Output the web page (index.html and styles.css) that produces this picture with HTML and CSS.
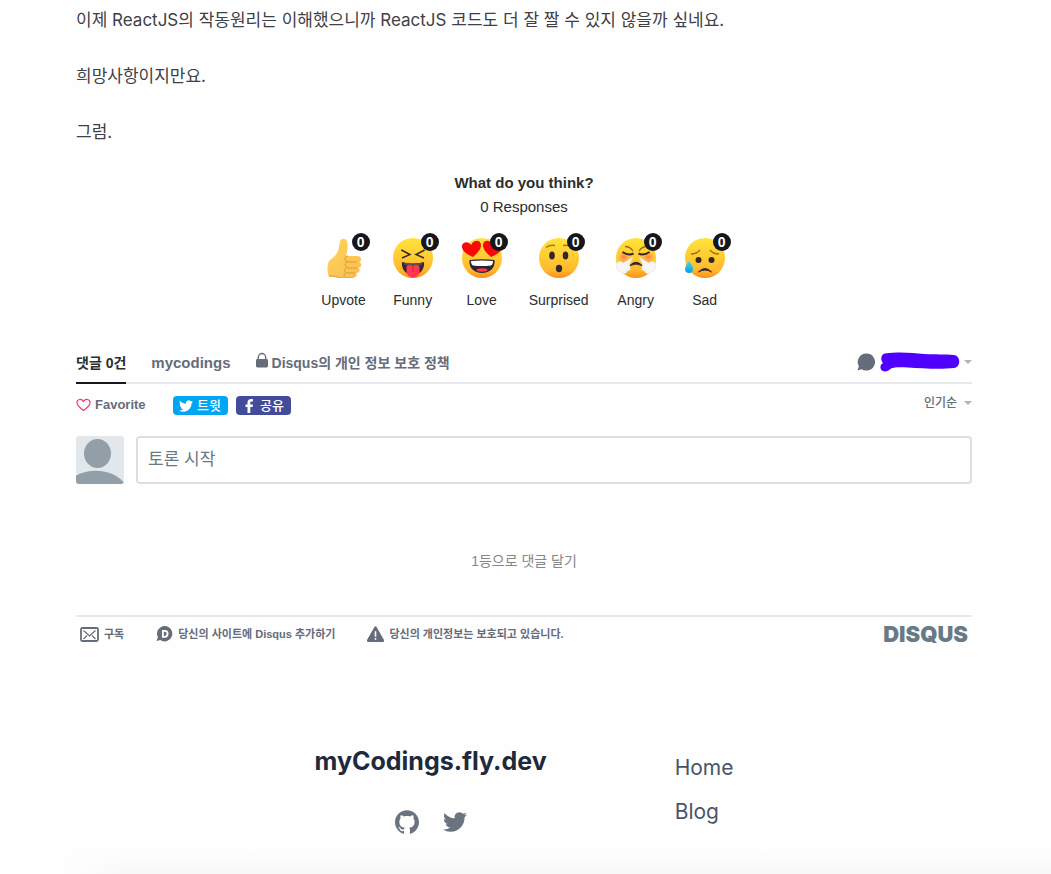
FILE: index.html
```html
<!DOCTYPE html>
<html lang="ko">
<head>
<meta charset="utf-8">
<meta name="viewport" content="width=device-width, initial-scale=1">
<title>myCodings.fly.dev</title>
<link rel="stylesheet" href="styles.css">
</head>
<body>
<svg class="defs" width="0" height="0" aria-hidden="true">
  <defs>
    <linearGradient id="face" x1="0" y1="0" x2="0" y2="1"><stop offset="0" stop-color="#ffe43a"/><stop offset=".5" stop-color="#ffca33"/><stop offset=".8" stop-color="#ffb92c"/><stop offset="1" stop-color="#f98e1c"/></linearGradient>
    <linearGradient id="hand" x1="0" y1="0" x2="1" y2="1"><stop offset="0" stop-color="#ffd45c"/><stop offset="1" stop-color="#f9bd4e"/></linearGradient>
    <radialGradient id="blush"><stop offset="0" stop-color="#ff6d5a" stop-opacity=".85"/><stop offset="1" stop-color="#ff8050" stop-opacity="0"/></radialGradient>
    <linearGradient id="drop" x1="0" y1="0" x2="0" y2="1"><stop offset="0" stop-color="#45dcf2"/><stop offset="1" stop-color="#079dda"/></linearGradient>
    <symbol id="bird" viewBox="0 0 24 24"><path d="M23.953 4.57a10 10 0 01-2.825.775 4.958 4.958 0 002.163-2.723c-.951.555-2.005.959-3.127 1.184a4.92 4.92 0 00-8.384 4.482C7.69 8.095 4.067 6.13 1.64 3.162a4.822 4.822 0 00-.666 2.475c0 1.71.87 3.213 2.188 4.096a4.904 4.904 0 01-2.228-.616v.06a4.923 4.923 0 003.946 4.827 4.996 4.996 0 01-2.212.085 4.936 4.936 0 004.604 3.417 9.867 9.867 0 01-6.102 2.105c-.39 0-.779-.023-1.17-.067a13.995 13.995 0 007.557 2.209c9.053 0 13.998-7.496 13.998-13.985 0-.21 0-.42-.015-.63A9.935 9.935 0 0024 4.59z"/></symbol>
  </defs>
</svg>

<main class="page">
  <article class="prose">
    <p>이제 ReactJS의 작동원리는 이해했으니까 ReactJS 코드도 더 잘 짤 수 있지 않을까 싶네요.</p>
    <p>희망사항이지만요.</p>
    <p>그럼.</p>
  </article>

  <section class="reactions">
    <h2 class="reactions-title">What do you think?</h2>
    <p class="reactions-count">0 Responses</p>
    <div class="reaction-list">
      <button class="reaction" type="button">
        <span class="emoji">
          <svg viewBox="0 0 40 40"><path d="M5 23c2-2 6-4 8-8 2-3 2-8 3-12 1-3 6-3 7 0 1 4 1 8-1 15h11c5 0 5 5 2 6 3 1 3 6-1 6 3 1 2 5-2 5 2 2 0 5-4 5H18c-4 0-7-2-13-1-2-4-2-12 0-16z" fill="url(#hand)"/><path d="M33 24h-8c-3 0-4-1-4-3s1-3 3-3m9 12h-8c-4 0-5-4-2-6m8 11h-7c-4 0-4-4-2-5m7 10h-6c-3 0-4-3-2-5M5 38c6-1 9 2 14 2" fill="none" stroke="#dd9739" stroke-width="1"/></svg>
          <span class="badge">0</span>
        </span>
        <span>Upvote</span>
      </button>
      <button class="reaction" type="button">
        <span class="emoji">
          <svg viewBox="0 0 40 40"><circle cx="20" cy="20" r="20" fill="url(#face)"/><path d="M8.300 12l8.700 4.500-8 3.500M31.700 12L23 16.500l8 3.500" fill="none" stroke="#3b2c2c" stroke-width="1.500"/><path d="M9 24q11 3 22 0c1 7-4 13-11 13S8 31 9 24z" fill="#3a2532"/><path d="M11 24.700q9 2 18 0v2q-9 2-18 0z" fill="#5b4c55"/><path d="M13.500 28q3-2 6.500 0 3.500-2 6.500 0v5c0 9-13 9-13 0z" fill="#ff3850"/><path d="M20 28v6" stroke="#c81c39" stroke-width="1"/></svg>
          <span class="badge">0</span>
        </span>
        <span>Funny</span>
      </button>
      <button class="reaction" type="button">
        <span class="emoji">
          <svg viewBox="0 0 40 40"><circle cx="20" cy="20" r="20" fill="url(#face)"/><path d="M11 19Q1 15 0 9.500C-1 4 6 2 9 7c3-6 10-5 10 0 0 5-4 8-8 12zM29 19q10-4 11-9.500C41 4 34 2 31 7c-3-6-10-5-10 0 0 5 4 8 8 12z" fill="#f80808"/><path d="M7.500 22q12.500-1.500 25 0c1 8-5 13-12.500 13S6.500 30 7.500 22z" fill="#292438"/><path d="M9 23q11-1.200 22 0c0 2-.5 4-2 4.500q-9 1-18 0C9.500 27 9 25 9 23z" fill="#fff"/><ellipse cx="20" cy="32" rx="5.500" ry="1.700" fill="#ff3b45"/></svg>
          <span class="badge">0</span>
        </span>
        <span>Love</span>
      </button>
      <button class="reaction" type="button">
        <span class="emoji">
          <svg viewBox="0 0 40 40"><circle cx="20" cy="20" r="20" fill="url(#face)"/><path d="M7 9.500q4-3 9-2M24 7.500q5-1 9 2" fill="none" stroke="#a97418" stroke-width="1.400"/><ellipse cx="13" cy="17.500" rx="2.800" ry="4" fill="#35262d"/><ellipse cx="26.500" cy="17.500" rx="2.800" ry="4" fill="#35262d"/><ellipse cx="20" cy="30.500" rx="3.200" ry="3.700" fill="#35262d"/></svg>
          <span class="badge">0</span>
        </span>
        <span>Surprised</span>
      </button>
      <button class="reaction" type="button">
        <span class="emoji">
          <svg viewBox="0 0 40 40"><circle cx="20" cy="20" r="20" fill="url(#face)"/><circle cx="8" cy="19" r="6" fill="url(#blush)"/><circle cx="32" cy="19" r="6" fill="url(#blush)"/><path d="M9 8.500q5 0 8 4.500M31 8.500q-5 0-8 4.500" fill="none" stroke="#98631b" stroke-width="1.300"/><path d="M6.500 14q6 4 11 1.500M33.500 14q-6 4-11 1.500" fill="none" stroke="#38252b" stroke-width="2"/><path d="M14 27.500q6-6.500 12 0-6-3-12 0z" fill="#38252b" stroke="#38252b" stroke-width="1"/><path d="M17 19L7 25c-3-3-7-1-6 2-2 3 0 6 3 6 2 4 7 3 7 0 4 0 4-4 2-6zM23 19l10 6c3-3 7-1 6 2 2 3 0 6-3 6-2 4-7 3-7 0-4 0-4-4-2-6z" fill="#f7f7f7" stroke="#dcdde0" stroke-width=".6"/></svg>
          <span class="badge">0</span>
        </span>
        <span>Angry</span>
      </button>
      <button class="reaction" type="button">
        <span class="emoji">
          <svg viewBox="0 0 40 40"><circle cx="20" cy="20" r="20" fill="url(#face)"/><path d="M6 16q6 0 9-4M34 16q-6 0-9-4" fill="none" stroke="#a66f18" stroke-width="1.400"/><circle cx="13.500" cy="22" r="3" fill="#35262d"/><circle cx="26.500" cy="22" r="3" fill="#35262d"/><path d="M13.500 34q6.500-7 13 0-6.500-4-13 0z" fill="#35262d" stroke="#35262d" stroke-width="1"/><path d="M4 23c2 3 4 5 4 8a4 4 0 01-8 0c0-3 2-5 4-8z" fill="url(#drop)"/></svg>
          <span class="badge">0</span>
        </span>
        <span>Sad</span>
      </button>
    </div>
  </section>

  <section class="comments">
    <nav class="tabs">
      <a class="tab tab-active" href="#comments">댓글 0건</a>
      <a class="tab tab-latin" href="#site">mycodings</a>
      <a class="tab" href="#privacy"><svg class="lock" viewBox="0 0 13 16"><rect x="0" y="7" width="13" height="9" rx="1.500" fill="currentColor"/><path d="M2.500 7V5a4 4 0 018 0v2" fill="none" stroke="currentColor" stroke-width="1.500"/></svg>Disqus의 개인 정보 보호 정책</a>
      <button class="account" type="button" aria-label="계정">
        <svg class="bubble" viewBox="0 0 20 20"><path d="M10 1a9 9 0 11-5 16.500L.500 19l1.500-4.500A9 9 0 0110 1z" fill="currentColor"/></svg>
        <svg class="scribble" viewBox="0 0 80 20"><path d="M5 1.500C20-.5 32 1 44 2c12 .5 20 .3 30 1 7 1 7 12 0 13-12 1.500-32 .5-46-.5-7-.5-14-.5-17 1C7 21 1 20 .500 16c-.4-3 1-4 2.500-5C0 8 1 2 5 1.500z" fill="#4f00ff"/></svg>
        <svg class="caret" viewBox="0 0 8 4"><path d="M0 0h8L4 4z" fill="currentColor"/></svg>
      </button>
    </nav>

    <div class="toolbar">
      <button class="favorite" type="button"><svg viewBox="0 0 16 14"><path d="M8 12.800C4 9.800 1 7.500 1 4.500 1 .5 6 0 8 3.200 10 0 15 .5 15 4.500c0 3-3 5.300-7 8.300z" fill="none" stroke="#f23a78" stroke-width="1.300"/></svg>Favorite</button>
      <div class="shares">
        <button class="share share-tweet" type="button"><svg viewBox="0 0 24 24"><use href="#bird"/></svg>트윗</button>
        <button class="share share-post" type="button"><svg viewBox="0 0 14 14"><path d="M5.500 14V8H3.500V5.500h2v-2C5.500 1.300 6.800 0 9 0h2v2.500H9.500C8.600 2.500 8.300 3 8.300 3.800v1.700H11L10.600 8H8.300v6z" fill="currentColor"/></svg>공유</button>
      </div>
      <label class="sort">
        <select aria-label="정렬"><option>인기순</option></select>
        <svg class="caret" viewBox="0 0 8 4"><path d="M0 0h8L4 4z" fill="currentColor"/></svg>
      </label>
    </div>

    <form class="composer">
      <svg class="avatar" viewBox="0 0 48 48"><rect width="48" height="48" fill="#e1e7eb"/><ellipse cx="21.500" cy="17.500" rx="13.500" ry="14.500" fill="#929fa8"/><path d="M0 48V39.500C13 32.500 35 32 47.500 46v2z" fill="#929fa8"/></svg>
      <input class="message" type="text" placeholder="토론 시작" aria-label="토론 시작">
    </form>

    <p class="empty">1등으로 댓글 달기</p>

    <div class="disqus-footer">
      <a href="#subscribe"><svg class="mail" viewBox="0 0 19 15"><rect x="1" y="1" width="17" height="13" rx="1.500" fill="none" stroke="currentColor" stroke-width="1.800"/><path d="M3.500 3.500l6 5.500 6-5.500M3.500 12L7 8.500M15.500 12L12 8.500" fill="none" stroke="currentColor" stroke-width="1.200"/></svg>구독</a>
      <a href="#add"><svg class="mark" viewBox="0 0 17 17"><path d="M9 0a8.200 8.200 0 11-5 15L0 16l1.500-4A8.200 8.200 0 019 0z" fill="currentColor"/><path d="M6.800 5.200h2c4 0 4 6.300 0 6.300h-2z" fill="none" stroke="#fff" stroke-width="2"/></svg>당신의 사이트에 Disqus 추가하기</a>
      <a href="#data"><svg class="mark" viewBox="0 0 16 15"><path d="M7 .8q1-1.300 2 0l7 12.400q.5 1.500-1 1.800H1q-1.500-.3-1-1.800z" fill="currentColor"/><path d="M8 5v5M8 11.300v1.600" stroke="#fff" stroke-width="1.500"/></svg>당신의 개인정보는 보호되고 있습니다.</a>
      <a class="disqus-logo" href="#disqus">DISQUS</a>
    </div>
  </section>
</main>

<footer class="site-footer">
  <div class="brand">
    <h2>myCodings.fly.dev</h2>
    <div class="social">
      <a href="#github" aria-label="GitHub"><svg viewBox="0 0 24 24"><path d="M12 .297c-6.630 0-12 5.373-12 12 0 5.303 3.438 9.800 8.205 11.385.6.113.82-.258.82-.577 0-.285-.01-1.040-.015-2.040-3.338.724-4.042-1.610-4.042-1.610C4.422 18.070 3.633 17.700 3.633 17.700c-1.087-.744.084-.729.084-.729 1.205.084 1.838 1.236 1.838 1.236 1.070 1.835 2.809 1.305 3.495.998.108-.776.417-1.305.76-1.605-2.665-.3-5.466-1.332-5.466-5.930 0-1.310.465-2.380 1.235-3.220-.135-.303-.54-1.523.105-3.176 0 0 1.005-.322 3.300 1.230.96-.267 1.980-.399 3-.405 1.020.006 2.040.138 3 .405 2.280-1.552 3.285-1.230 3.285-1.230.645 1.653.24 2.873.12 3.176.765.840 1.230 1.910 1.230 3.220 0 4.610-2.805 5.625-5.475 5.920.42.360.81 1.096.81 2.220 0 1.606-.015 2.896-.015 3.286 0 .315.21.690.825.570C20.565 22.092 24 17.592 24 12.297c0-6.627-5.373-12-12-12" fill="currentColor"/></svg></a>
      <a href="#twitter" aria-label="Twitter"><svg viewBox="0 0 24 24"><use href="#bird"/></svg></a>
    </div>
  </div>
  <nav class="links">
    <a href="#home">Home</a>
    <a href="#blog">Blog</a>
  </nav>
</footer>
<div class="fade"></div>
</body>
</html>
```
FILE: styles.css
```css
* { box-sizing: border-box; }

body {
  margin: 0;
  min-height: 100vh;
  display: flex;
  flex-direction: column;
  padding-right: 3px;
  background: #fefefe;
  font-family: "Liberation Sans", "Noto Sans CJK KR", sans-serif;
  color: #2a2e2e;
}

h2, p { margin: 0; }
a { color: inherit; text-decoration: none; }
svg { display: block; flex: none; fill: currentColor; }
.defs { position: absolute; }

button {
  border: 0;
  padding: 0;
  background: none;
  color: inherit;
  font: inherit;
  cursor: pointer;
}

.page {
  width: 100%;
  max-width: 944px;
  margin: 0 auto;
  padding: 6px 24px 0;
}

.prose {
  display: flex;
  flex-direction: column;
  gap: 28px;
  font-family: Inter, "Noto Sans CJK KR", sans-serif;
  font-size: 17px;
  line-height: 28px;
  color: #3f3f46;
}

/* Reactions */
.reactions {
  padding-top: 25px;
  text-align: center;
  font-size: 15px;
  line-height: 24px;
}

.reactions-title { font-size: 15px; }

.reaction-list {
  display: flex;
  flex-wrap: wrap;
  justify-content: center;
  gap: 25px;
  padding-top: 19px;
}

.reaction {
  min-width: 44px;
  display: flex;
  flex-direction: column;
  align-items: center;
  gap: 12px;
  font-size: 14px;
  line-height: 20px;
}

.emoji { position: relative; }
.emoji svg { width: 40px; height: 40px; }

.badge {
  position: absolute;
  top: -5px;
  right: -6px;
  width: 18px;
  height: 18px;
  border-radius: 50%;
  background: #16161c;
  color: #fff;
  font-size: 14px;
  font-weight: 700;
  line-height: 18px;
}

/* Comments */
.comments { color: #656c7a; font-weight: 700; }

.tabs {
  display: flex;
  gap: 25px;
  margin-top: 32px;
  border-bottom: 2px solid #e7e7ee;
}

.tab {
  display: flex;
  align-items: center;
  gap: 4px;
  height: 42px;
  margin-bottom: -2px;
  border-bottom: 2px solid transparent;
  font-size: 14px;
  white-space: nowrap;
}

.tab-latin { font-size: 15px; }
.tab-active { border-color: #16161c; color: #2a2e2e; }
.lock { width: 12px; height: 16px; margin-bottom: 4px; }

.account {
  display: flex;
  align-items: center;
  gap: 4px;
  margin-left: auto;
}

.bubble { width: 19px; height: 20px; }
.scribble { width: 80px; height: 20px; }
.caret { width: 8px; height: 4px; color: #afb2b7; }

.toolbar {
  display: flex;
  align-items: flex-start;
  gap: 27px;
  padding-top: 12px;
}

.favorite {
  display: flex;
  align-items: center;
  gap: 4px;
  font-size: 13px;
  line-height: 17px;
}

.favorite svg { width: 15px; height: 14px; }
.shares { display: flex; gap: 8px; }

.share {
  display: flex;
  align-items: center;
  justify-content: center;
  gap: 4px;
  min-width: 55px;
  height: 19px;
  border-radius: 4px;
  color: #fff;
  font-size: 13px;
  font-weight: 500;
  line-height: 18px;
}

.share svg { width: 14px; height: 14px; }
.share-tweet { background: #00a6f3; }
.share-post { background: #434b9b; }

.sort {
  display: flex;
  align-items: center;
  gap: 6px;
  height: 14px;
  margin-left: auto;
}

.sort select {
  appearance: none;
  border: 0;
  padding: 0;
  background: none;
  color: inherit;
  font: inherit;
  font-size: 12px;
  font-weight: 500;
  line-height: 16px;
}

.composer {
  display: flex;
  gap: 12px;
  padding-top: 21px;
}

.avatar { width: 48px; height: 48px; border-radius: 3px; }

.message {
  flex: 1;
  min-width: 0;
  height: 48px;
  border: 2px solid #dbdfe4;
  border-radius: 4px;
  padding: 0 10px;
  background: #fff;
  font: inherit;
  font-size: 17px;
  font-weight: 400;
}

.message::placeholder { color: #687a86; opacity: 1; }

.empty {
  padding: 67px 0 44px;
  color: #838787;
  font-size: 14px;
  font-weight: 400;
  line-height: 20px;
  text-align: center;
}

.disqus-footer {
  display: flex;
  flex-wrap: wrap;
  align-items: center;
  gap: 0 32px;
  padding: 4px 4px 0;
  border-top: 2px solid #e7e7ee;
  font-size: 11px;
  line-height: 26px;
}

.disqus-footer a { display: flex; align-items: center; gap: 5px; }
.mail { width: 19px; height: 15px; }
.mark { width: 17px; height: 16px; }

.disqus-footer .disqus-logo {
  margin-left: auto;
  color: #687a86;
  font-family: Inter, sans-serif;
  font-size: 22px;
  font-weight: 900;
}

/* Site footer */
.site-footer {
  display: flex;
  flex-wrap: wrap;
  justify-content: center;
  gap: 24px 128px;
  padding: 96px 24px 8px;
  font-family: Inter, "Noto Sans CJK KR", sans-serif;
}

.brand {
  display: flex;
  flex-direction: column;
  align-items: center;
  gap: 31px;
}

.brand h2 {
  color: #1f293b;
  font-size: 25px;
  font-weight: 700;
  line-height: 36px;
}

.social { display: flex; gap: 24px; color: #6b7280; }
.social svg { width: 24px; height: 24px; }

.links {
  display: flex;
  flex-direction: column;
  padding-top: 3px;
  color: #475569;
  font-size: 21px;
  line-height: 44px;
}

.fade {
  height: 24px;
  margin: auto -3px 0 64px;
  background: linear-gradient(to right, #fefefe, transparent 64px), linear-gradient(#fefefe, #f8f8f8);
}
```
